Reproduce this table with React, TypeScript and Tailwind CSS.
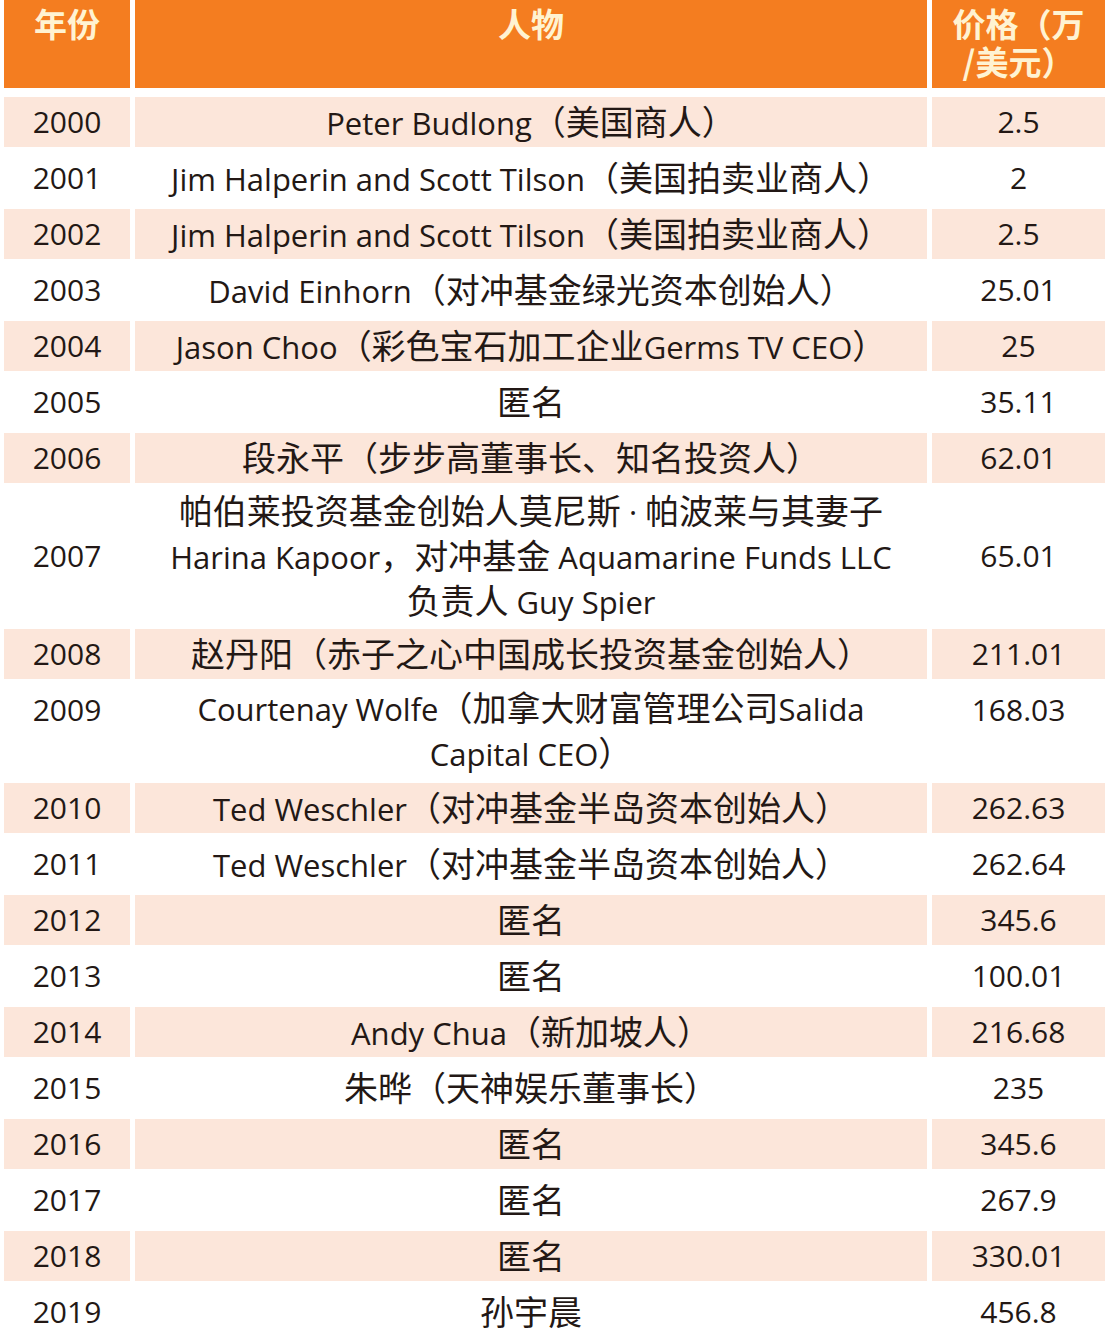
const rows: { year: string; person: string[]; price: string; top?: boolean }[] = [
  { year: '2000', person: ['Peter Budlong（美国商人）'], price: '2.5' },
  { year: '2001', person: ['Jim Halperin and Scott Tilson（美国拍卖业商人）'], price: '2' },
  { year: '2002', person: ['Jim Halperin and Scott Tilson（美国拍卖业商人）'], price: '2.5' },
  { year: '2003', person: ['David Einhorn（对冲基金绿光资本创始人）'], price: '25.01' },
  { year: '2004', person: ['Jason Choo（彩色宝石加工企业Germs TV CEO）'], price: '25' },
  { year: '2005', person: ['匿名'], price: '35.11' },
  { year: '2006', person: ['段永平（步步高董事长、知名投资人）'], price: '62.01' },
  {
    year: '2007',
    person: ['帕伯莱投资基金创始人莫尼斯 · 帕波莱与其妻子', 'Harina Kapoor，对冲基金 Aquamarine Funds LLC', '负责人 Guy Spier'],
    price: '65.01',
  },
  { year: '2008', person: ['赵丹阳（赤子之心中国成长投资基金创始人）'], price: '211.01' },
  { year: '2009', person: ['Courtenay Wolfe（加拿大财富管理公司Salida', 'Capital CEO）'], price: '168.03', top: true },
  { year: '2010', person: ['Ted Weschler（对冲基金半岛资本创始人）'], price: '262.63' },
  { year: '2011', person: ['Ted Weschler（对冲基金半岛资本创始人）'], price: '262.64' },
  { year: '2012', person: ['匿名'], price: '345.6' },
  { year: '2013', person: ['匿名'], price: '100.01' },
  { year: '2014', person: ['Andy Chua（新加坡人）'], price: '216.68' },
  { year: '2015', person: ['朱晔（天神娱乐董事长）'], price: '235' },
  { year: '2016', person: ['匿名'], price: '345.6' },
  { year: '2017', person: ['匿名'], price: '267.9' },
  { year: '2018', person: ['匿名'], price: '330.01' },
  { year: '2019', person: ['孙宇晨'], price: '456.8' },
];

const CJK = /([\u3000-\u303f\u4e00-\u9fff\uff00-\uffef]+)/;

// Chinese runs are set a bit larger than the latin text, as in the source image
const Mixed = ({ text }: { text: string }) => {
  const parts = text.split(CJK);
  return (
    <>
      {parts.map((p, i) =>
        i % 2 === 1 ? (
          <span key={i} className="text-[34px]" style={{ fontFamily: '"Noto Sans CJK SC", sans-serif' }}>
            {p}
          </span>
        ) : (
          <span key={i} className="text-[31px]">{p}</span>
        )
      )}
    </>
  );
};

const App = () => {
  return (
    <div
      className="w-[1108px] h-[1340px] overflow-hidden bg-white pl-[4px] pr-[3px] text-[#231815]"
      style={{ fontFamily: '"Open Sans", "Noto Sans CJK SC", sans-serif' }}
    >
      {/* header */}
      <div
        className="grid grid-cols-[126px_1fr_173px] gap-x-[5px] h-[88px] text-[33px] font-bold text-[#fff3d2] leading-[38px]"
        style={{ fontFamily: '"Noto Sans CJK SC", sans-serif' }}
      >
        <div className="bg-[#f47d20] text-center pt-[4px]">年份</div>
        <div className="bg-[#f47d20] text-center pt-[4px]">人物</div>
        <div className="bg-[#f47d20] text-center pt-[4px]">
          价格（万
          <br />
          /美元）
        </div>
      </div>

      <div className="mt-[6px]">
        {rows.map((row, i) => {
          const peach = i % 2 === 0;
          const bg = peach ? 'bg-[#fce6da]' : '';
          const lines = row.person.length;
          const h = lines === 3 ? 'h-[134px]' : lines === 2 ? 'h-[92px]' : 'h-[50px]';
          const side = row.top ? 'items-start pt-[4px]' : 'items-center';
          return (
            <div key={row.year} className="grid grid-cols-[126px_1fr_173px] gap-x-[5px] py-[3px] text-[30px] leading-[42px]">
              <div className={`${bg} ${h} flex justify-center ${side}`}>{row.year}</div>
              <div className={`${bg} ${h} flex flex-col justify-center items-center text-center`}>
                {row.person.map((p) => (
                  <div key={p} className="whitespace-nowrap">
                    <Mixed text={p} />
                  </div>
                ))}
              </div>
              <div className={`${bg} ${h} flex justify-center ${side}`}>{row.price}</div>
            </div>
          );
        })}
      </div>
    </div>
  );
};

export default App;
